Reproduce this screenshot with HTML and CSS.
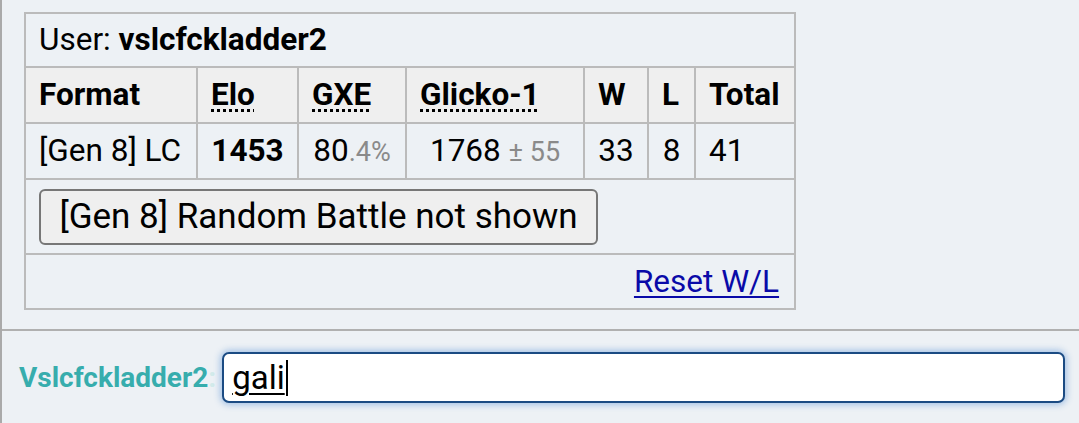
FILE: index.html
```html
<!DOCTYPE html>
<html>
<head>
<meta charset="utf-8">
<link rel="stylesheet" href="styles.css">
</head>
<body>
<div class="frame">
  <div class="pane">
    <table class="ladder">
      <colgroup>
        <col class="c-format"><col class="c-elo"><col class="c-gxe"><col class="c-glicko"><col class="c-w"><col class="c-l"><col class="c-total">
      </colgroup>
      <tr class="r-user"><td colspan="7" class="user">User: <strong>vslcfckladder2</strong></td></tr>
      <tr class="r-head">
        <th>Format</th>
        <th><abbr>Elo</abbr></th>
        <th><abbr>GXE</abbr></th>
        <th><abbr>Glicko-1</abbr></th>
        <th>W</th>
        <th>L</th>
        <th>Total</th>
      </tr>
      <tr class="r-data">
        <td class="left">[Gen 8] LC</td>
        <td><strong>1453</strong></td>
        <td>80<small>.4%</small></td>
        <td>1768 <small>± 55</small></td>
        <td>33</td>
        <td>8</td>
        <td class="left">41</td>
      </tr>
      <tr class="r-btn"><td colspan="7" class="btnrow"><button class="btn">[Gen 8] Random Battle not shown</button></td></tr>
      <tr class="r-reset"><td colspan="7" class="reset"><a href="#">Reset W/L</a></td></tr>
    </table>
  </div>
  <div class="chatbar">
    <label class="name">Vslcfckladder2<span class="colon">:</span></label>
    <div class="input"><span class="typed">gali</span><span class="caret"></span></div>
  </div>
</div>
</body>
</html>
```
FILE: styles.css
```css
html, body {
  margin: 0;
  padding: 0;
  background: #edf1f5;
  font-family: Roboto, "Noto Sans", sans-serif;
  color: #000;
}
.frame {
  border-left: 2px solid #aaaaaa;
  min-height: 423px;
  box-sizing: border-box;
}
.pane {
  padding: 12px 0 19px 22px;
  border-bottom: 2px solid #b0b0b0;
}
.ladder {
  border-collapse: collapse;
  table-layout: fixed;
  width: 770px;
  font-size: 31.5px;
}
.c-format { width: 172px; }
.c-elo { width: 101px; }
.c-gxe { width: 108px; }
.c-glicko { width: 178px; }
.c-w { width: 64px; }
.c-l { width: 47px; }
.c-total { width: 100px; }
.ladder td, .ladder th {
  border: 2px solid #bbbbbb;
  padding: 0 13px;
  white-space: nowrap;
  line-height: 36px;
}
.r-user td { height: 52px; }
.r-head th { height: 54px; }
.r-data td { height: 54px; }
.r-btn td { height: 73px; }
.r-reset td { height: 53px; }
.ladder th {
  text-align: left;
  background: #efefef;
  font-weight: bold;
}
.ladder td {
  text-align: center;
}
.ladder td.left, .ladder td.user {
  text-align: left;
}
abbr {
  text-decoration: underline dotted;
  text-decoration-thickness: 3px;
  text-underline-offset: 4px;
}
small {
  color: #8a8a8a;
  font-size: 27px;
}
.ladder td.btnrow {
  text-align: left;
}
.btn {
  font-family: Roboto, "Noto Sans", sans-serif;
  font-size: 35px;
  color: #000;
  background: #efefef;
  border: 2px solid #777;
  border-radius: 6px;
  height: 56px;
  width: 559px;
  padding: 0;
  margin: 0;
  display: block;
  line-height: 52px;
}
.ladder td.reset {
  text-align: right;
  padding-right: 15px;
}
.reset a {
  color: #0a0aa8;
  text-decoration: underline;
  text-decoration-thickness: 2px;
  text-underline-offset: 4px;
}
.chatbar {
  display: flex;
  align-items: center;
  padding: 21px 14px 0 17px;
  gap: 6px;
}
.name {
  color: #37adad;
  font-weight: bold;
  font-size: 28px;
  white-space: nowrap;
}
.colon {
  color: #d2eaea;
}
.input {
  flex: 1;
  height: 51px;
  box-sizing: border-box;
  background: #fff;
  border: 2px solid #1b4b83;
  border-radius: 7px;
  box-shadow: 0 0 6px 2px rgba(80, 140, 210, 0.45);
  font-size: 33px;
  display: flex;
  align-items: center;
  padding-left: 8px;
}
.typed {
  text-decoration: underline;
  text-underline-offset: 4px;
  text-decoration-thickness: 2px;
}
.caret {
  display: inline-block;
  width: 2px;
  height: 36px;
  background: #000;
  margin-left: 1px;
}
```
